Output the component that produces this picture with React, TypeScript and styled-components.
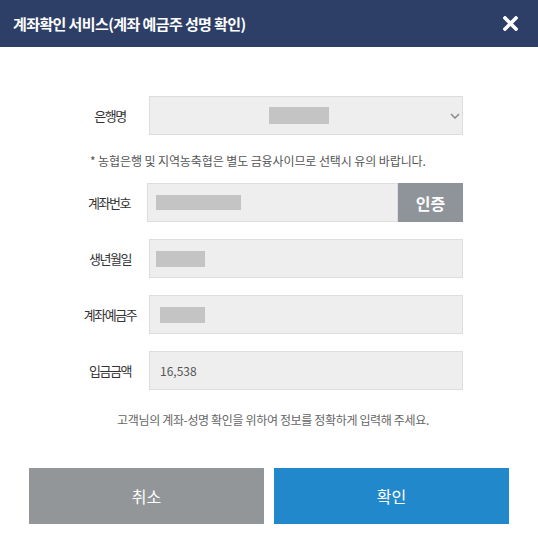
import React from 'react'
import styled, { createGlobalStyle } from 'styled-components'

const GlobalStyle = createGlobalStyle`
  * { box-sizing: border-box; }
  body {
    margin: 0;
    background: #ffffff;
    font-family: "Noto Sans CJK KR", "Noto Sans", sans-serif;
  }
`

const Modal = styled.div`
  width: 538px;
  height: 555px;
  background: #ffffff;
  display: flex;
  flex-direction: column;
`

const Header = styled.header`
  height: 47px;
  background: #2e3f67;
  display: flex;
  align-items: center;
  justify-content: space-between;
  padding: 0 20px 0 13px;

  h1 {
    margin: 0;
    color: #ffffff;
    font-size: 15px;
    font-weight: 700;
    letter-spacing: -0.6px;
  }
`

const CloseButton = styled.button`
  border: none;
  background: none;
  padding: 0;
  width: 15px;
  height: 15px;
  display: flex;
  cursor: pointer;
`

const Body = styled.div`
  display: flex;
  flex-direction: column;
  padding-top: 49px;
`

const Row = styled.div<{ $gap?: number }>`
  display: flex;
  align-items: center;
  margin-top: ${(p) => p.$gap ?? 17}px;

  &:first-child {
    margin-top: 0;
  }
`

const Label = styled.label<{ $width?: number }>`
  width: ${(p) => p.$width ?? 78}px;
  margin-left: 71px;
  text-align: center;
  font-size: 13px;
  color: #333333;
  letter-spacing: -1.5px;
`

const Field = styled.div<{ $width?: number; $pad?: number }>`
  width: ${(p) => p.$width ?? 314}px;
  height: 39px;
  background: #eeeeee;
  border: 1px solid #dddddd;
  display: flex;
  align-items: center;
  padding-left: ${(p) => p.$pad ?? 10}px;
  font-size: 12px;
  color: #555555;
`

const SelectBox = styled(Field)`
  display: grid;
  grid-template-columns: 1fr 14px;
  padding-left: 0;
  justify-items: center;
`

const Mask = styled.span<{ $w: number; $h: number }>`
  display: block;
  width: ${(p) => p.$w}px;
  height: ${(p) => p.$h}px;
  background: #c4c4c4;
`

const Note = styled.p`
  margin: 17px 0 0 90px;
  line-height: 18px;
  font-size: 12px;
  color: #555555;
  letter-spacing: -0.1px;
`

const AuthButton = styled.button`
  width: 65px;
  height: 39px;
  border: none;
  background: #8e9499;
  color: #ffffff;
  font-family: inherit;
  font-size: 16px;
  font-weight: 700;
  padding: 0;
`

const Guide = styled.p`
  margin: 21px 0 0;
  line-height: 18px;
  text-align: center;
  font-size: 12px;
  color: #666666;
  letter-spacing: -0.35px;
  padding-left: 8px;
`

const Actions = styled.div`
  display: flex;
  gap: 10px;
  padding: 0 29px;
  margin-top: 39px;
`

const ActionButton = styled.button<{ $primary?: boolean }>`
  width: 235px;
  height: 56px;
  border: none;
  background: ${(p) => (p.$primary ? '#2288cc' : '#939699')};
  color: #ffffff;
  font-family: inherit;
  font-size: 16px;
  cursor: pointer;
`

const App: React.FC = () => {
  return (
    <>
      <GlobalStyle />
      <Modal>
        <Header>
          <h1>계좌확인 서비스(계좌 예금주 성명 확인)</h1>
          <CloseButton aria-label='닫기'>
            <svg width='15' height='15' viewBox='0 0 15 15'>
              <path
                d='M2 2 L13 13 M13 2 L2 13'
                stroke='#ffffff'
                strokeWidth='3.6'
                strokeLinecap='square'
              />
            </svg>
          </CloseButton>
        </Header>

        <Body>
          <Row>
            <Label>은행명</Label>
            <SelectBox>
              <Mask $w={60} $h={17} />
              <svg width='10' height='6' viewBox='0 0 10 6'>
                <path
                  d='M1 1 L5 5 L9 1'
                  fill='none'
                  stroke='#8a8a8a'
                  strokeWidth='1.5'
                />
              </svg>
            </SelectBox>
          </Row>

          <Note>* 농협은행 및 지역농축협은 별도 금융사이므로 선택시 유의 바랍니다.</Note>

          <Row $gap={13}>
            <Label $width={76}>계좌번호</Label>
            <Field $width={251} $pad={8}>
              <Mask $w={85} $h={15} />
            </Field>
            <AuthButton>인증</AuthButton>
          </Row>

          <Row>
            <Label>생년월일</Label>
            <Field $pad={6}>
              <Mask $w={49} $h={16} />
            </Field>
          </Row>

          <Row>
            <Label>계좌예금주</Label>
            <Field>
              <Mask $w={45} $h={16} />
            </Field>
          </Row>

          <Row>
            <Label>입금금액</Label>
            <Field>16,538</Field>
          </Row>

          <Guide>고객님의 계좌-성명 확인을 위하여 정보를 정확하게 입력해 주세요.</Guide>

          <Actions>
            <ActionButton>취소</ActionButton>
            <ActionButton $primary>확인</ActionButton>
          </Actions>
        </Body>
      </Modal>
    </>
  )
}

export default App
